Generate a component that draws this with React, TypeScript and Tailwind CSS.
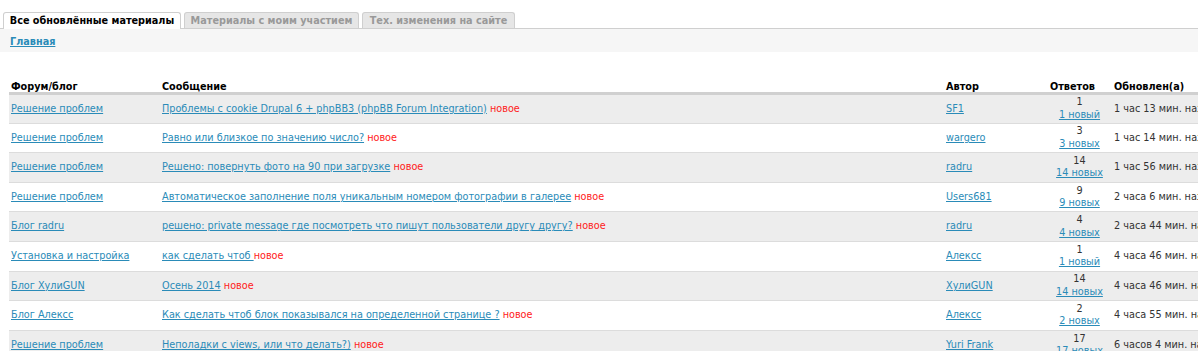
import React from 'react';

type Row = {
  forum: string;
  title: string;
  author: string;
  count: number;
  fresh: string;
  updated: string;
};

const rows: Row[] = [
  { forum: 'Решение проблем', title: 'Проблемы с cookie Drupal 6 + phpBB3 (phpBB Forum Integration)', author: 'SF1', count: 1, fresh: '1 новый', updated: '1 час 13 мин. назад' },
  { forum: 'Решение проблем', title: 'Равно или близкое по значению число?', author: 'wargero', count: 3, fresh: '3 новых', updated: '1 час 14 мин. назад' },
  { forum: 'Решение проблем', title: 'Решено: повернуть фото на 90 при загрузке', author: 'radru', count: 14, fresh: '14 новых', updated: '1 час 56 мин. назад' },
  { forum: 'Решение проблем', title: 'Автоматическое заполнение поля уникальным номером фотографии в галерее', author: 'Users681', count: 9, fresh: '9 новых', updated: '2 часа 6 мин. назад' },
  { forum: 'Блог radru', title: 'решено: private message где посмотреть что пишут пользователи другу другу?', author: 'radru', count: 4, fresh: '4 новых', updated: '2 часа 44 мин. назад' },
  { forum: 'Установка и настройка', title: 'как сделать чтоб ', author: 'Алексс', count: 1, fresh: '1 новый', updated: '4 часа 46 мин. назад' },
  { forum: 'Блог ХулиGUN', title: 'Осень 2014', author: 'ХулиGUN', count: 14, fresh: '14 новых', updated: '4 часа 46 мин. назад' },
  { forum: 'Блог Алексс', title: 'Как сделать чтоб блок показывался на определенной странице ?', author: 'Алексс', count: 2, fresh: '2 новых', updated: '4 часа 55 мин. назад' },
  { forum: 'Решение проблем', title: 'Неполадки с views, или что делать?)', author: 'Yuri Frank', count: 17, fresh: '17 новых', updated: '6 часов 4 мин. назад' },
];

const link = 'text-[#2a8bb8] underline';
const tab = 'h-[16px] rounded-t-[3px] border border-b-0 border-[#cfcfcf] text-center font-bold leading-[16px] whitespace-nowrap';

export default function App() {
  return (
    <div className="w-[1198px] h-[351px] overflow-hidden bg-white font-['DejaVu_Sans',Verdana,sans-serif] text-[9.7px] text-[#333]">
      <div className="flex gap-[3px] px-[3px] pt-[12px] border-b border-[#cfcfcf]">
        <div className={`${tab} -mb-px h-[17px] w-[178px] bg-white text-black`}>Все обновлённые материалы</div>
        <div className={`${tab} w-[175px] bg-[#e6e6e6] text-[#999]`}>Материалы с моим участием</div>
        <div className={`${tab} w-[153px] bg-[#e6e6e6] text-[#999]`}>Тех. изменения на сайте</div>
      </div>
      <div className="h-[23px] bg-[#f6f6f6] pl-[10px] pt-[6px] leading-[13px]">
        <a className={`${link} font-bold`}>Главная</a>
      </div>
      <table className="ml-[9px] mt-[26px] w-[1300px] border-collapse">
        <thead>
          <tr className="border-b-[3px] border-[#d0d0d0] text-left font-bold text-black">
            <th className="w-[151px] pl-[2px] pt-[3px] leading-[11px]">Форум/блог</th>
            <th className="w-[784px] pl-[2px] pt-[3px] leading-[11px]">Сообщение</th>
            <th className="w-[104px] pl-[2px] pt-[3px] leading-[11px]">Автор</th>
            <th className="w-[63px] pl-[2px] pt-[3px] leading-[11px]">Ответов</th>
            <th className="pl-[3px] pt-[3px] leading-[11px]">Обновлен(а)</th>
          </tr>
        </thead>
        <tbody>
          {rows.map((r, i) => (
            <tr key={i} className={`border-b border-[#dcdcdc] ${i % 2 === 0 ? 'bg-[#ededed]' : 'bg-white'}`}>
              <td className="h-[29.6px] py-0 pl-[2px] leading-[12.4px]">
                <a className={link}>{r.forum}</a>
              </td>
              <td className="pl-[2px] leading-[12.4px]">
                <a className={link}>{r.title}</a> <span className="text-[#ff2020]">новое</span>
              </td>
              <td className="pl-[2px] leading-[12.4px]">
                <a className={link}>{r.author}</a>
              </td>
              <td className="text-center leading-[12.4px]">
                {r.count}
                <br />
                <a className={link}>{r.fresh}</a>
              </td>
              <td className="whitespace-nowrap pl-[3px] leading-[12.4px]">{r.updated}</td>
            </tr>
          ))}
        </tbody>
      </table>
    </div>
  );
}
